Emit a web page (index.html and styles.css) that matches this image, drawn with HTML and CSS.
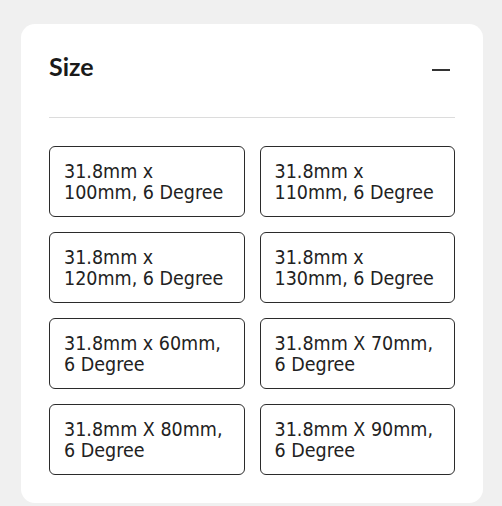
FILE: index.html
```html
<!DOCTYPE html>
<html>
<head>
<meta charset="utf-8">
<link rel="stylesheet" href="styles.css">
</head>
<body>
<div class="card">
  <div class="header">
    <h2 class="title">Size</h2>
    <span class="toggle" aria-label="collapse"></span>
  </div>
  <div class="divider"></div>
  <div class="options">
    <button class="opt">31.8mm x 100mm, 6 Degree</button>
    <button class="opt">31.8mm x 110mm, 6 Degree</button>
    <button class="opt">31.8mm x 120mm, 6 Degree</button>
    <button class="opt">31.8mm x 130mm, 6 Degree</button>
    <button class="opt">31.8mm x 60mm, 6 Degree</button>
    <button class="opt">31.8mm X 70mm, 6 Degree</button>
    <button class="opt">31.8mm X 80mm, 6 Degree</button>
    <button class="opt">31.8mm X 90mm, 6 Degree</button>
  </div>
</div>
</body>
</html>
```
FILE: styles.css
```css
html, body {
  margin: 0;
  padding: 0;
  background: #f0f0f0;
}
body {
  padding: 24px 19px 0 21px;
}
.card {
  background: #fff;
  border-radius: 14px;
  padding: 0 28px 28px 28px;
  width: 406px;
}
.header {
  display: flex;
  align-items: center;
  justify-content: space-between;
  height: 88px;
}
.title {
  margin: 0 0 5px 0;
  font-family: Lato, "Liberation Sans", sans-serif;
  font-weight: 700;
  font-size: 25px;
  color: #1a1a1a;
}
.toggle {
  display: block;
  width: 18px;
  height: 2px;
  background: #333;
  margin-right: 5px;
  margin-top: 3px;
}
.divider {
  height: 1px;
  background: #dcdcdc;
  margin-top: 5px;
  margin-bottom: 28px;
}
.options {
  display: grid;
  grid-template-columns: 1fr 1fr;
  gap: 15px;
}
.opt {
  height: 71px;
  box-sizing: border-box;
  border: 1px solid #2b2b2b;
  border-radius: 6px;
  background: #fff;
  padding: 0 14px;
  text-align: left;
  font-family: "DejaVu Sans Condensed", "DejaVu Sans", sans-serif;
  font-size: 19.5px;
  line-height: 21px;
  color: #222;
  cursor: pointer;
}
```
